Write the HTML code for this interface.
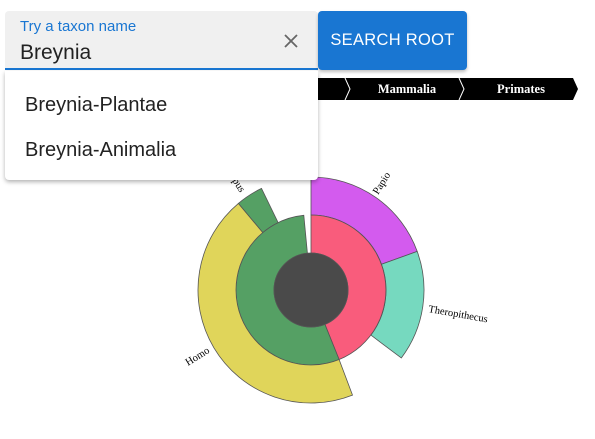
<!DOCTYPE html>
<html><head><style>
body{margin:0;width:595px;height:439px;background:#fff;font-family:"Liberation Sans",sans-serif;position:relative;overflow:hidden}
.field{position:absolute;left:5px;top:11px;width:313px;height:57px;background:#f0f0f0;border-radius:4px 4px 0 0;border-bottom:2px solid #1976d2}
.lbl{position:absolute;left:15px;top:7px;font-size:15px;color:#1976d2}
.val{position:absolute;left:15px;top:30px;font-size:21px;color:#222}
.btn{position:absolute;left:318px;top:11px;width:149px;height:59px;background:#1976d2;border-radius:4px;color:#fff;font-size:16.5px;line-height:59px;text-align:center;letter-spacing:.3px;box-shadow:0 2px 3px rgba(0,0,0,.25)}
.dd{position:absolute;left:5px;top:71px;width:313px;height:109px;background:#fff;border-radius:0 0 4px 4px;box-shadow:0 2px 4px rgba(0,0,0,.3);z-index:3}
.it{position:absolute;left:20px;font-size:20px;color:#222}
</style></head><body>
<svg width="595" height="439" style="position:absolute;left:0;top:0">
<polygon points="5,78 573,78 578,89 573,100 5,100" fill="#000"/>
<polyline points="345,78 350,89 345,100" fill="none" stroke="#fff" stroke-width="1"/>
<polyline points="459,78 464,89 459,100" fill="none" stroke="#fff" stroke-width="1"/>
<text x="407" y="93" fill="#fff" font-family="Liberation Serif" font-weight="bold" font-size="12.5" text-anchor="middle">Mammalia</text>
<text x="521" y="93" fill="#fff" font-family="Liberation Serif" font-weight="bold" font-size="12.5" text-anchor="middle">Primates</text>
<g transform="translate(311,290)" stroke="#555" stroke-width="0.8">
<path d="M0,-113 A113,113 0 0 1 106.2,-38.6 L70.5,-25.7 A75,75 0 0 0 0,-75Z" fill="#d35bee"/>
<path d="M106.2,-38.6 A113,113 0 0 1 90.3,68.0 L59.9,45.1 A75,75 0 0 0 70.5,-25.7Z" fill="#76d9bf"/>
<path d="M0,-75 A75,75 0 0 1 28.1,69.5 L13.9,34.3 A37,37 0 0 0 0,-37Z" fill="#f95c7c"/>
<path d="M28.1,69.5 A75,75 0 1 1 -7.2,-74.7 L-3.6,-36.8 A37,37 0 1 0 13.9,34.3Z" fill="#55a064"/>
<path d="M41.5,105.1 A113,113 0 0 1 -72.6,-86.6 L-48.2,-57.5 A75,75 0 0 0 28.1,69.5Z" fill="#e0d55a"/>
<path d="M-72.6,-86.6 A113,113 0 0 1 -49.5,-101.6 L-32.9,-67.4 A75,75 0 0 0 -48.2,-57.5Z" fill="#55a064"/>
<circle r="37" fill="#4a4a4a"/>
</g>
<g font-family="Liberation Serif" font-size="10.5" fill="#000">
<text transform="translate(378,195) rotate(-58)">Papio</text>
<text transform="translate(428,312) rotate(10)">Theropithecus</text>
<text transform="translate(188,366) rotate(-32)">Homo</text>
<text transform="translate(240,193) rotate(58)" text-anchor="end">Hylobates pus</text>
</g>
</svg>
<div class="field"><div class="lbl">Try a taxon name</div><div class="val">Breynia</div>
<svg style="position:absolute;left:278px;top:22px" width="16" height="16"><path d="M2,2L14,14M14,2L2,14" stroke="#666" stroke-width="1.8"/></svg></div>
<div class="btn">SEARCH ROOT</div>
<div class="dd"><div class="it" style="top:23px">Breynia-Plantae</div><div class="it" style="top:68px">Breynia-Animalia</div></div>
</body></html>
